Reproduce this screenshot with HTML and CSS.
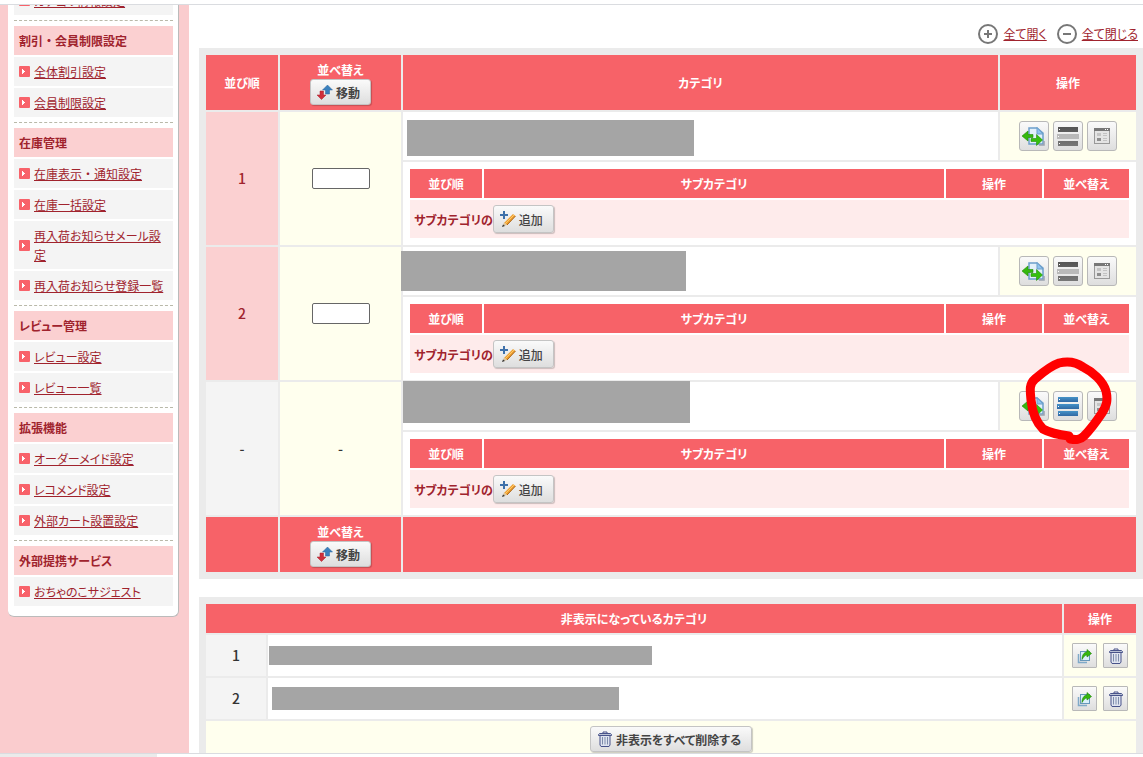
FILE: index.html
```
<!DOCTYPE html>
<html lang="ja">
<head>
    <meta charset="UTF-8">
    <meta name="viewport" content="width=device-width, initial-scale=1.0">
    <title>カテゴリ管理</title>
    <link rel="stylesheet" href="styles.css">
</head>
<body>
<!-- shared icons -->
<svg class="sprite" aria-hidden="true">
    <defs>
        <linearGradient id="dark" x1="0" y1="0" x2="0" y2="1"><stop offset="0" stop-color="#555"/><stop offset="1" stop-color="#777"/></linearGradient>
        <linearGradient id="blue" x1="0" y1="0" x2="0" y2="1"><stop offset="0" stop-color="#4592c8"/><stop offset="1" stop-color="#3168a3"/></linearGradient>
    </defs>
    <symbol id="i-arrow" viewBox="0 0 11 11">
        <rect width="11" height="11" rx="1" fill="#f8626a"/>
        <path d="M3 3h1v1h1v1h1v1h-1v1h-1v1h-1z" fill="#fff"/>
    </symbol>
    <symbol id="i-open" viewBox="0 0 20 20">
        <circle cx="10" cy="10" r="9" fill="#fff" stroke="#777" stroke-width="2"/>
        <path d="M6 10h8M10 6v8" stroke="#777" stroke-width="2"/>
    </symbol>
    <symbol id="i-close" viewBox="0 0 20 20">
        <circle cx="10" cy="10" r="9" fill="#fff" stroke="#777" stroke-width="2"/>
        <path d="M6 10h8" stroke="#777" stroke-width="2"/>
    </symbol>
    <symbol id="i-sort" viewBox="0 0 16 16">
        <path d="M10.500 1l5 5h-3v4h-4V6h-3z" fill="#3a80bd" stroke="#2a649c" stroke-width=".5"/>
        <path d="M3 7h3.500v4H9l-4.500 4.500L0 11h3z" fill="#cf2f3b" stroke="#a8232e" stroke-width=".5"/>
    </symbol>
    <symbol id="i-add" viewBox="0 0 16 16">
        <path d="M4 0v8M0 4h8" stroke="#3f71aa" stroke-width="2"/>
        <path d="M4 12L13 3l2.500 2L7 14z" fill="#eda02e"/>
        <path d="M5 13L14 4" stroke="#ffc668" stroke-width="1"/>
        <path d="M7 14l8.500-9" stroke="#a8611a" stroke-width="1"/>
        <path d="M4 11.500L7 14l-4.500 1.500z" fill="#dcc39c"/>
        <path d="M2 16l1-2.500 2 1.500z" fill="#333"/>
    </symbol>
    <symbol id="i-page" viewBox="0 0 24 24">
        <path d="M7 4h8l6 5v11H7z" fill="#e3f0fa" stroke="#6c9fcb" stroke-width="1.500"/>
        <path d="M15 3.500L21 10h-6z" fill="#8fc3ee" stroke="#6c9fcb"/>
        <path d="M17 21h5v-4" fill="none" stroke="#99a3b0" stroke-width="1.500"/>
        <path d="M0 12l6-5v3.500h5v3H6V17z" fill="#35b80d" stroke="#248d09" stroke-width=".6"/>
        <path d="M20.500 16l-6-5.500v4H9v3h5.500v4z" fill="#35c00d" stroke="#248d09" stroke-width=".6"/>
    </symbol>
    <symbol id="i-rows" viewBox="0 0 24 24">
        <path d="M2 3h20v5H2zM2 17h20v5H2z" fill="url(#dark)"/>
        <path d="M1 10h22v5H1z" fill="#b9b9b9"/>
        <path d="M3 5h1v1H3zM2 12h1v1H2zM3 19h1v1H3z" fill="#fff"/>
    </symbol>
    <symbol id="i-rows-on" viewBox="0 0 24 24">
        <path d="M2 3h20v5H2z" fill="url(#blue)"/>
        <path d="M1 10h22v5H1z" fill="url(#blue)"/>
        <path d="M2 17h20v5H2z" fill="url(#blue)"/>
        <path d="M3 5h1v1H3zM2 12h1v1H2zM3 19h1v1H3z" fill="#fff"/>
    </symbol>
    <symbol id="i-window" viewBox="0 0 16 16">
        <rect x=".5" y=".5" width="15" height="15" fill="#e4e4e4" stroke="#999"/>
        <path d="M0 0h16v3H0z" fill="#777"/>
        <path d="M11 1h1v1h-1zM13 1h1v1h-1z" fill="#fff"/>
        <path d="M3 5h4v3H3z" fill="#c4c4c4"/>
        <path d="M3 10h4v3H3z" fill="#8e8e8e"/>
        <path d="M9 5.500h4M9 7.500h4M9 10.500h4M9 12.500h4" stroke="#c2c2c2"/>
    </symbol>
    <symbol id="i-export" viewBox="0 0 16 16">
        <path d="M1.500 6v8.500H10" fill="none" stroke="#7fa9c8" stroke-width="1.500"/>
        <rect x="3.500" y="3.500" width="9" height="9" fill="#d9f0fa" stroke="#6797ba"/>
        <path d="M5 11.500c0-4 1.500-7 5-7.500V1.500L14.500 5.500 10 9V7C8 7 6.500 9 5 11.500z" fill="#35b80d" stroke="#1f8208" stroke-width=".6"/>
    </symbol>
    <symbol id="i-trash" viewBox="0 0 16 16">
        <path d="M6 2.500V1h4v1.500" fill="none" stroke="#48538a"/>
        <path d="M3 4.500h10V14l-1 1.500H4L3 14z" fill="#dfe4ef" stroke="#48538a"/>
        <path d="M5.500 6v7.500M8 6v7.500M10.500 6v7.500" stroke="#7e8dab"/>
        <path d="M1.500 4.500v-1l1-1h11l1 1v1z" fill="#b9c1d4" stroke="#48538a"/>
    </symbol>
</svg>

<div class="page">
    <div class="main">
        <aside class="sidebar">
            <nav class="menu">
                <section>
                    <ul>
                        <li><svg><use href="#i-arrow"/></svg><a href="#">カテゴリ情報設定</a></li>
                    </ul>
                </section>
                <section>
                    <h2 class="wide">割引・会員制限設定</h2>
                    <ul>
                        <li><svg><use href="#i-arrow"/></svg><a href="#">全体割引設定</a></li>
                        <li><svg><use href="#i-arrow"/></svg><a href="#">会員制限設定</a></li>
                    </ul>
                </section>
                <section>
                    <h2>在庫管理</h2>
                    <ul>
                        <li><svg><use href="#i-arrow"/></svg><a class="wide" href="#">在庫表示・通知設定</a></li>
                        <li><svg><use href="#i-arrow"/></svg><a href="#">在庫一括設定</a></li>
                        <li><svg><use href="#i-arrow"/></svg><a href="#">再入荷お知らせメール設定</a></li>
                        <li><svg><use href="#i-arrow"/></svg><a href="#">再入荷お知らせ登録一覧</a></li>
                    </ul>
                </section>
                <section>
                    <h2>レビュー管理</h2>
                    <ul>
                        <li><svg><use href="#i-arrow"/></svg><a href="#">レビュー設定</a></li>
                        <li><svg><use href="#i-arrow"/></svg><a href="#">レビュー一覧</a></li>
                    </ul>
                </section>
                <section>
                    <h2>拡張機能</h2>
                    <ul>
                        <li><svg><use href="#i-arrow"/></svg><a href="#">オーダーメイド設定</a></li>
                        <li><svg><use href="#i-arrow"/></svg><a href="#">レコメンド設定</a></li>
                        <li><svg><use href="#i-arrow"/></svg><a href="#">外部カート設置設定</a></li>
                    </ul>
                </section>
                <section>
                    <h2>外部提携サービス</h2>
                    <ul>
                        <li><svg><use href="#i-arrow"/></svg><a href="#">おちゃのこサジェスト</a></li>
                    </ul>
                </section>
            </nav>
        </aside>

        <main class="content">
            <div class="toggles">
                <svg><use href="#i-open"/></svg><a href="#">全て開く</a>
                <svg><use href="#i-close"/></svg><a href="#">全て閉じる</a>
            </div>

            <div class="box">
                <table class="list">
                    <colgroup>
                        <col class="c-order"><col class="c-sort"><col><col class="c-action">
                    </colgroup>
                    <thead>
                        <tr>
                            <th>並び順</th>
                            <th>並べ替え<br><button class="btn" type="button"><svg><use href="#i-sort"/></svg>移動</button></th>
                            <th>カテゴリ</th>
                            <th>操作</th>
                        </tr>
                    </thead>
                    <tbody>
                        <tr>
                            <td class="num on" rowspan="2">1</td>
                            <td class="tool" rowspan="2"><input class="order" type="text" aria-label="1の並び順"></td>
                            <td class="name"><div class="mask mask-a"></div></td>
                            <td class="tool">
                                <div class="actions">
                                    <button class="btn icon" type="button" aria-label="移動"><svg><use href="#i-page"/></svg></button>
                                    <button class="btn icon" type="button" aria-label="一覧"><svg><use href="#i-rows"/></svg></button>
                                    <button class="btn icon win" type="button" aria-label="ページ"><svg><use href="#i-window"/></svg></button>
                                </div>
                            </td>
                        </tr>
                        <tr>
                            <td class="nest" colspan="2">
                                <table class="sub">
                                    <colgroup><col class="s-order"><col><col class="s-action"><col class="s-sort"></colgroup>
                                    <tr><th>並び順</th><th>サブカテゴリ</th><th>操作</th><th>並べ替え</th></tr>
                                    <tr><td colspan="4"><div class="add">サブカテゴリの<button class="btn tall" type="button"><svg><use href="#i-add"/></svg>追加</button></div></td></tr>
                                </table>
                            </td>
                        </tr>
                        <tr>
                            <td class="num on" rowspan="2">2</td>
                            <td class="tool" rowspan="2"><input class="order" type="text" aria-label="2の並び順"></td>
                            <td class="name"><div class="mask mask-b"></div></td>
                            <td class="tool">
                                <div class="actions">
                                    <button class="btn icon" type="button" aria-label="移動"><svg><use href="#i-page"/></svg></button>
                                    <button class="btn icon" type="button" aria-label="一覧"><svg><use href="#i-rows"/></svg></button>
                                    <button class="btn icon win" type="button" aria-label="ページ"><svg><use href="#i-window"/></svg></button>
                                </div>
                            </td>
                        </tr>
                        <tr>
                            <td class="nest" colspan="2">
                                <table class="sub">
                                    <colgroup><col class="s-order"><col><col class="s-action"><col class="s-sort"></colgroup>
                                    <tr><th>並び順</th><th>サブカテゴリ</th><th>操作</th><th>並べ替え</th></tr>
                                    <tr><td colspan="4"><div class="add">サブカテゴリの<button class="btn tall" type="button"><svg><use href="#i-add"/></svg>追加</button></div></td></tr>
                                </table>
                            </td>
                        </tr>
                        <tr>
                            <td class="num" rowspan="2">-</td>
                            <td class="tool" rowspan="2">-</td>
                            <td class="name"><div class="mask mask-c"></div></td>
                            <td class="tool">
                                <div class="actions">
                                    <button class="btn icon" type="button" aria-label="移動"><svg><use href="#i-page"/></svg></button>
                                    <button class="btn icon" type="button" aria-label="一覧"><svg><use href="#i-rows-on"/></svg></button>
                                    <button class="btn icon win" type="button" aria-label="ページ"><svg><use href="#i-window"/></svg></button>
                                    <!-- hand-drawn ring round the middle button -->
                                    <svg class="ring" viewBox="0 0 90 92">
                                        <path d="M46 80C38 79 27 77 20 73C13 66 9 54 8 44C7 34 6 28 12 23C19 17 27 10 36 7C44 5 53 6 60 11C70 16 80 25 83 35C85 44 84 49 79 57C73 66 68 73 61 80C57 84 53 84 47 83"/>
                                    </svg>
                                </div>
                            </td>
                        </tr>
                        <tr>
                            <td class="nest" colspan="2">
                                <table class="sub">
                                    <colgroup><col class="s-order"><col><col class="s-action"><col class="s-sort"></colgroup>
                                    <tr><th>並び順</th><th>サブカテゴリ</th><th>操作</th><th>並べ替え</th></tr>
                                    <tr><td colspan="4"><div class="add">サブカテゴリの<button class="btn tall" type="button"><svg><use href="#i-add"/></svg>追加</button></div></td></tr>
                                </table>
                            </td>
                        </tr>
                    </tbody>
                    <tfoot>
                        <tr>
                            <th></th>
                            <th>並べ替え<br><button class="btn" type="button"><svg><use href="#i-sort"/></svg>移動</button></th>
                            <th colspan="2"></th>
                        </tr>
                    </tfoot>
                </table>
            </div>

            <div class="box">
                <table class="list hidden-list">
                    <colgroup><col class="h-num"><col><col class="h-action"></colgroup>
                    <tr><th colspan="2">非表示になっているカテゴリ</th><th>操作</th></tr>
                    <tr>
                        <td class="num">1</td>
                        <td><div class="mask mask-d"></div></td>
                        <td class="tool">
                            <div class="actions">
                                <button class="btn small" type="button" aria-label="表示"><svg><use href="#i-export"/></svg></button>
                                <button class="btn small" type="button" aria-label="削除"><svg><use href="#i-trash"/></svg></button>
                            </div>
                        </td>
                    </tr>
                    <tr>
                        <td class="num">2</td>
                        <td><div class="mask mask-e"></div></td>
                        <td class="tool">
                            <div class="actions">
                                <button class="btn small" type="button" aria-label="表示"><svg><use href="#i-export"/></svg></button>
                                <button class="btn small" type="button" aria-label="削除"><svg><use href="#i-trash"/></svg></button>
                            </div>
                        </td>
                    </tr>
                    <tr>
                        <td class="tool delete" colspan="3"><button class="btn" type="button"><svg><use href="#i-trash"/></svg>非表示をすべて削除する</button></td>
                    </tr>
                </table>
            </div>
        </main>
    </div>
    <div class="status"><span></span></div>
</div>
</body>
</html>
```
FILE: styles.css
```
* {
    box-sizing: border-box;
}
body {
    margin: 0;
    font-family: "Noto Sans CJK JP", sans-serif;
    font-size: 12px;
    line-height: 19px;
    font-feature-settings: "palt";
    color: #333;
    background: #fff;
}
a {
    color: #a0232d;
    text-underline-offset: 1px;
    text-decoration-skip-ink: none;
}
.wide {
    font-feature-settings: normal;
}
.sprite {
    position: absolute;
    width: 0;
    height: 0;
}
.page {
    display: flex;
    flex-direction: column;
    height: 100vh;
    padding-top: 4px;
}
.main {
    display: flex;
    flex: 1;
    min-height: 0;
    overflow: hidden;
    border-top: 1px solid #dadce0;
    border-bottom: 1px solid #dadce0;
}
.status {
    height: 3px;
}
.status span {
    display: block;
    width: 157px;
    height: 3px;
    background: #ebebeb;
}

/* sidebar */
.sidebar {
    flex: none;
    width: 189px;
    padding: 0 10px 0 8px;
    background: #faccce;
}
.menu {
    margin-top: -19px;
    padding: 0 5px 10px 6px;
    background: #fff;
    border-right: 1px solid #bbb;
    border-bottom: 1px solid #bbb;
    border-radius: 0 0 6px 6px;
}
.menu section + section {
    margin-top: 5px;
    padding-top: 5px;
    border-top: 1px dashed #b9b9a9;
}
.menu h2 {
    margin: 0 0 2px;
    padding: 5px;
    font-size: 12px;
    font-weight: bold;
    color: #a0232d;
    background: #fbd0d1;
}
.menu ul {
    display: grid;
    gap: 2px;
    margin: 0;
    padding: 0;
    list-style: none;
}
.menu li {
    display: flex;
    align-items: center;
    gap: 4px;
    padding: 5px;
    background: #f4f4f4;
}
.menu li svg {
    flex: none;
    width: 11px;
    height: 11px;
}

/* content */
.content {
    flex: 1;
    min-width: 0;
    padding-left: 10px;
}
.toggles {
    display: flex;
    justify-content: flex-end;
    align-items: center;
    gap: 5px;
    height: 43px;
    padding: 14px 5px 0 0;
}
.toggles svg {
    width: 20px;
    height: 20px;
}
.toggles a + svg {
    margin-left: 5px;
}
.box {
    margin-bottom: 18px;
    padding: 5px;
    background: #ebebeb;
}
table {
    width: 100%;
    table-layout: fixed;
    border-collapse: separate;
    border-spacing: 2px;
}
th, td {
    padding: 0;
    font-weight: bold;
}
th {
    padding: 5px 0;
    color: #fff;
    background: #f76268;
}
td {
    background: #fff;
}
.c-order { width: 72px; }
.c-sort { width: 121px; }
.c-action { width: 136px; }
.s-order { width: 72px; }
.s-action { width: 96px; }
.s-sort { width: 85px; }
.h-num { width: 60px; }
.h-action { width: 72px; }

td.num {
    font-size: 14px;
    font-weight: 500;
    text-align: center;
    background: #f4f4f4;
}
td.on {
    color: #a0232d;
    background: #fbd0d1;
}
td.tool {
    font-size: 14px;
    font-weight: 500;
    text-align: center;
    background: #ffffee;
}
td.nest {
    padding: 5px;
}
.name {
    position: relative;
    height: 48px;
}
.sub td {
    background: #feebeb;
}
.add {
    display: flex;
    align-items: center;
    padding: 5px 4px;
    color: #a0232d;
}
.order {
    display: block;
    width: 58px;
    height: 21px;
    margin: 0 auto;
    border: 1px solid #666;
    border-radius: 2px;
    background: #fff;
}
.hidden-list td {
    height: 41px;
}
.hidden-list td.delete {
    height: 36px;
}

/* blanked out names */
.mask {
    background: #a5a5a5;
}
.mask-a {
    width: 287px;
    height: 36px;
    margin: 4px 0 0 4px;
}
.mask-b {
    position: absolute;
    top: 4px;
    left: -2px;
    width: 285px;
    height: 40px;
}
.mask-c {
    position: absolute;
    top: -1px;
    left: 0;
    width: 287px;
    height: 42px;
}
.mask-d {
    width: 383px;
    height: 19px;
    margin-left: 1px;
}
.mask-e {
    width: 347px;
    height: 23px;
    margin-left: 4px;
}

/* buttons */
.btn {
    display: inline-flex;
    align-items: center;
    justify-content: center;
    gap: 3px;
    height: 26px;
    padding: 0 10px 0 6px;
    font: bold 12px/19px "Noto Sans CJK JP", sans-serif;
    font-feature-settings: "palt";
    color: #444;
    vertical-align: top;
    border: 1px solid #c4c4c4;
    border-radius: 3px;
    background: linear-gradient(#fafafa, #dedede);
    box-shadow: 1px 1px 1px rgba(0, 0, 0, 0.2);
}
.btn svg {
    flex: none;
    width: 16px;
    height: 16px;
}
.tall {
    height: 28px;
    font-weight: 500;
}
.icon {
    width: 30px;
    height: 30px;
    padding: 0;
    border-color: #b8b8b8;
    box-shadow: none;
}
.icon svg {
    width: 24px;
    height: 24px;
}
.win svg {
    width: 16px;
    height: 16px;
}
.small {
    width: 25px;
    height: 25px;
    padding: 0;
    border-color: #b8b8b8;
    border-radius: 1px;
    box-shadow: none;
}
.actions {
    position: relative;
    display: flex;
    justify-content: center;
    gap: 4px;
}
.hidden-list .actions {
    gap: 6px;
}
.ring {
    position: absolute;
    top: -35px;
    right: 23px;
    z-index: 1;
    width: 90px;
    height: 92px;
    pointer-events: none;
}
.ring path {
    fill: none;
    stroke: #ff0000;
    stroke-width: 9;
    stroke-linecap: round;
    stroke-linejoin: round;
}
```
